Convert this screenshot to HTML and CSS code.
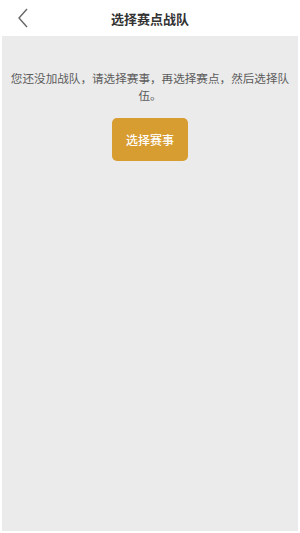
FILE: index.html
```html
<!DOCTYPE html>
<html lang="zh-CN">
<head>
  <meta charset="UTF-8">
  <meta name="viewport" content="width=device-width, initial-scale=1.0">
  <title>选择赛点战队</title>
  <link rel="stylesheet" href="styles.css">
</head>
<body>

<header class="topo">
  <a class="voltar" href="#">
    <svg width="12" height="20" viewBox="0 0 12 20">
      <path d="M10 1 L2 10 L10 19" fill="none" stroke="#666" stroke-width="1.4"/>
    </svg>
  </a>
  <h1>选择赛点战队</h1>
</header>

<main class="conteudo">
  <!-- Aviso sem equipe -->
  <p class="aviso">您还没加战队，请选择赛事，再选择赛点，然后选择队伍。</p>
  <button class="escolher">选择赛事</button>
</main>

</body>
</html>
```

FILE: styles.css
```css
* {
  margin: 0;
  padding: 0;
  box-sizing: border-box;
}
html, body {
  height: 100%;
}
body {
  font-family: "Noto Sans CJK SC", "Noto Sans", sans-serif;
  background-color: #fff;
  color: #333;
  display: flex;
  flex-direction: column;
  padding: 0 2px 2px 2px;
}
.topo {
  height: 36px;
  display: flex;
  align-items: center;
  justify-content: center;
  position: relative;
  background: #fff;
}
.topo h1 {
  font-size: 13px;
  font-weight: bold;
  color: #333;
}
.voltar {
  position: absolute;
  left: 15px;
  top: 8px;
}
.conteudo {
  flex: 1;
  background-color: #ebebeb;
  display: flex;
  flex-direction: column;
  align-items: center;
  padding: 34px 6px 0;
}
.aviso {
  font-size: 11.6px;
  line-height: 17px;
  color: #5c5c5c;
  text-align: center;
}
.escolher {
  margin-top: 14px;
  width: 76px;
  height: 43px;
  background-color: #d89d30;
  color: #fff;
  border: none;
  border-radius: 5px;
  font-family: inherit;
  font-size: 12px;
  font-weight: 500;
}
```
